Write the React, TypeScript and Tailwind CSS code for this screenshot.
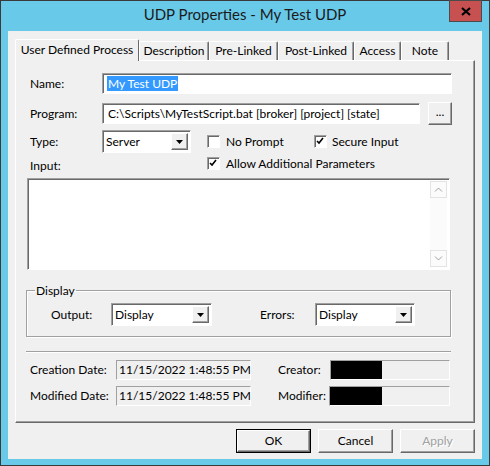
import { Fragment } from 'react';

const raised =
  'border border-t-white border-l-white border-b-[#696969] border-r-[#696969] shadow-[inset_-1px_-1px_0_#a0a0a0]';
const sunken =
  'border border-t-[#a0a0a0] border-l-[#a0a0a0] border-b-white border-r-white shadow-[inset_1px_1px_0_#696969]';
const flat = 'border border-t-[#a0a0a0] border-l-[#a0a0a0] border-b-white border-r-white';

const Check = ({ checked }: { checked?: boolean }) => (
  <div className={`w-[13px] h-[13px] bg-white flex items-center justify-center shrink-0 ${sunken}`}>
    {checked && (
      <svg width="9" height="9" viewBox="0 0 9 9">
        <path d="M1 4 L3 6 L7 1" stroke="#000" strokeWidth="1.6" fill="none" />
      </svg>
    )}
  </div>
);

const Combo = ({ value, width, height }: { value: string; width: string; height: string }) => (
  <div className={`${width} ${height} bg-white flex items-stretch p-[2px] ${sunken}`}>
    <div className="flex-1 flex items-center pl-[1px]">{value}</div>
    <div className={`w-[17px] bg-[#f0f0f0] flex items-center justify-center ${raised}`}>
      <svg width="7" height="4" viewBox="0 0 7 4">
        <path d="M0 0 H7 L3.5 4 Z" fill="#000" />
      </svg>
    </div>
  </div>
);

const tabs = [
  { key: 'udp', label: 'User Defined Process', w: 'w-[124px]' },
  { key: 'desc', label: 'Description', w: 'w-[70px]' },
  { key: 'pre', label: 'Pre-Linked', w: 'w-[69px]' },
  { key: 'post', label: 'Post-Linked', w: 'w-[76px]' },
  { key: 'acc', label: 'Access', w: 'w-[47px]' },
  { key: 'note', label: 'Note', w: 'w-[48px]' },
];

const App = () => (
  <Fragment>
    <div className="w-[490px] h-[466px] bg-[#69c9e9] border border-[#3a3a3a] flex flex-col font-['Lato',sans-serif] text-[12px] text-black">
      {
        //Title bar
      }
      <div className="h-[30px] grid grid-cols-[40px_1fr_40px]">
        <div />
        <div className="flex items-center justify-center text-[15px] text-[#1b1b1b] pb-[3px]">
          UDP Properties - My Test UDP
        </div>
        <div className="-mt-px">
          <div className="w-[33px] h-[22px] bg-[#c75050] border border-[#4b4b4b] flex items-center justify-center">
            <svg width="10" height="9" viewBox="0 0 10 9">
              <path d="M1 1 L9 8 M9 1 L1 8" stroke="#000" strokeWidth="2.2" />
            </svg>
          </div>
        </div>
      </div>
      {
        //Client
      }
      <div className="mx-[7px] h-[428px] bg-[#f0f0f0] pt-[8px] px-[7px] flex flex-col">
        <div className="flex items-end h-[21px] relative z-10">
          {tabs.map((t, i) =>
            i === 0 ? (
              <div
                key={t.key}
                className={`${t.w} h-[22px] -mb-px bg-[#f0f0f0] border-t border-l border-t-white border-l-white border-r border-r-[#696969] rounded-t-[2px] flex items-center justify-center pb-[2px]`}
              >
                {t.label}
              </div>
            ) : (
              <div
                key={t.key}
                className={`${t.w} h-[19px] border-t border-l border-t-white border-l-white border-r border-r-[#696969] shadow-[inset_-1px_0_0_#a0a0a0] rounded-t-[2px] flex items-center justify-center`}
              >
                {t.label}
              </div>
            )
          )}
        </div>
        <div className="h-[363px] border border-t-white border-l-white border-b-[#696969] border-r-[#696969] shadow-[inset_-1px_-1px_0_#a0a0a0] flex flex-col">
          {
            //Name
          }
          <div className="mt-[12px] h-[21px] flex items-center pl-[14px]">
            <div className="w-[72px]">Name:</div>
            <div className={`w-[350px] h-[21px] bg-white flex items-center pl-[4px] ${sunken}`}>
              <span className="bg-[#3399ff] text-white px-[1px] leading-[15px]">My Test UDP</span>
            </div>
          </div>
          {
            //Program
          }
          <div className="mt-[8px] h-[23px] flex items-center pl-[14px]">
            <div className="w-[72px]">Program:</div>
            <div className={`w-[318px] h-[21px] bg-white flex items-center pl-[5px] whitespace-nowrap ${sunken}`}>
              C:\Scripts\MyTestScript.bat [broker] [project] [state]
            </div>
            <div className={`ml-[8px] w-[24px] h-[23px] flex items-center justify-center pb-[3px] ${raised}`}>
              ...
            </div>
          </div>
          {
            //Type + options
          }
          <div className="mt-[5px] h-[23px] flex items-center pl-[14px]">
            <div className="w-[72px]">Type:</div>
            <Combo value="Server" width="w-[89px]" height="h-[23px]" />
            <div className="ml-[16px] flex items-center gap-[6px] w-[107px]">
              <Check />
              <span>No Prompt</span>
            </div>
            <div className="flex items-center gap-[5px]">
              <Check checked />
              <span>Secure Input</span>
            </div>
          </div>
          <div className="mt-[4px] h-[16px] flex pl-[14px]">
            <div className="w-[177px] self-end leading-[14px]">Input:</div>
            <div className="flex items-start gap-[6px] h-[13px]">
              <Check checked />
              <span className="leading-[13px]">Allow Additional Parameters</span>
            </div>
          </div>
          {
            //Input text
          }
          <div className="mt-[5px] ml-[11px] w-[423px] h-[92px] bg-white flex justify-end p-[2px] border border-t-[#a0a0a0] border-l-[#a0a0a0] border-b-white border-r-white shadow-[inset_1px_1px_0_#696969]">
            <div className="w-[17px] flex flex-col justify-between bg-[#fbfbfb]">
              <div className="h-[17px] border border-[#e3e3e3] flex items-center justify-center">
                <svg width="9" height="5" viewBox="0 0 9 5">
                  <path d="M1 4.5 L4.5 1 L8 4.5" stroke="#a0a0a0" fill="none" />
                </svg>
              </div>
              <div className="h-[17px] border border-[#e3e3e3] flex items-center justify-center">
                <svg width="9" height="5" viewBox="0 0 9 5">
                  <path d="M1 0.5 L4.5 4 L8 0.5" stroke="#a0a0a0" fill="none" />
                </svg>
              </div>
            </div>
          </div>
          {
            //Display group
          }
          <fieldset className="mt-[13px] ml-[10px] w-[425px] h-[54px] border border-[#a0a0a0] shadow-[1px_1px_0_#fff,inset_1px_1px_0_#fff] px-[8px]">
            <legend className="px-[1px] leading-[15px]">Display</legend>
            <div className="mt-[5px] h-[23px] flex items-center">
              <div className="w-[16px]" />
              <div className="w-[60px]">Output:</div>
              <Combo value="Display" width="w-[101px]" height="h-[23px]" />
              <div className="ml-[48px] w-[55px]">Errors:</div>
              <Combo value="Display" width="w-[100px]" height="h-[23px]" />
            </div>
          </fieldset>
          <div className="mt-[14px] ml-[10px] w-[425px] h-[2px] border-t border-t-[#a0a0a0] border-b border-b-white" />
          {
            //Dates
          }
          <div className="mt-[7px] h-[20px] flex items-center pl-[14px]">
            <div className="w-[86px]">Creation Date:</div>
            <div className={`w-[135px] h-[20px] flex items-center pl-[2px] whitespace-nowrap ${flat}`}>
              11/15/2022 1:48:55 PM
            </div>
            <div className="ml-[27px] w-[52px]">Creator:</div>
            <div className={`w-[120px] h-[20px] ${flat}`}>
              <div className="w-[51px] h-full bg-black" />
            </div>
          </div>
          <div className="mt-[6px] h-[20px] flex items-center pl-[14px]">
            <div className="w-[86px]">Modified Date:</div>
            <div className={`w-[135px] h-[20px] flex items-center pl-[2px] whitespace-nowrap ${flat}`}>
              11/15/2022 1:48:55 PM
            </div>
            <div className="ml-[27px] w-[51px]">Modifier:</div>
            <div className={`w-[121px] h-[20px] ${flat}`}>
              <div className="w-[52px] h-full bg-black" />
            </div>
          </div>
        </div>
        {
          //Buttons
        }
        <div className="mt-[6px] flex justify-end gap-[7px]">
          <div className="w-[75px] h-[24px] border border-black">
            <div className={`h-full flex items-center justify-center ${raised}`}>OK</div>
          </div>
          <div className={`w-[75px] h-[24px] flex items-center justify-center ${raised}`}>Cancel</div>
          <div
            className={`w-[75px] h-[24px] flex items-center justify-center text-[#a0a0a0] [text-shadow:1px_1px_0_#fff] ${raised}`}
          >
            Apply
          </div>
        </div>
      </div>
    </div>
  </Fragment>
);

export default App;
